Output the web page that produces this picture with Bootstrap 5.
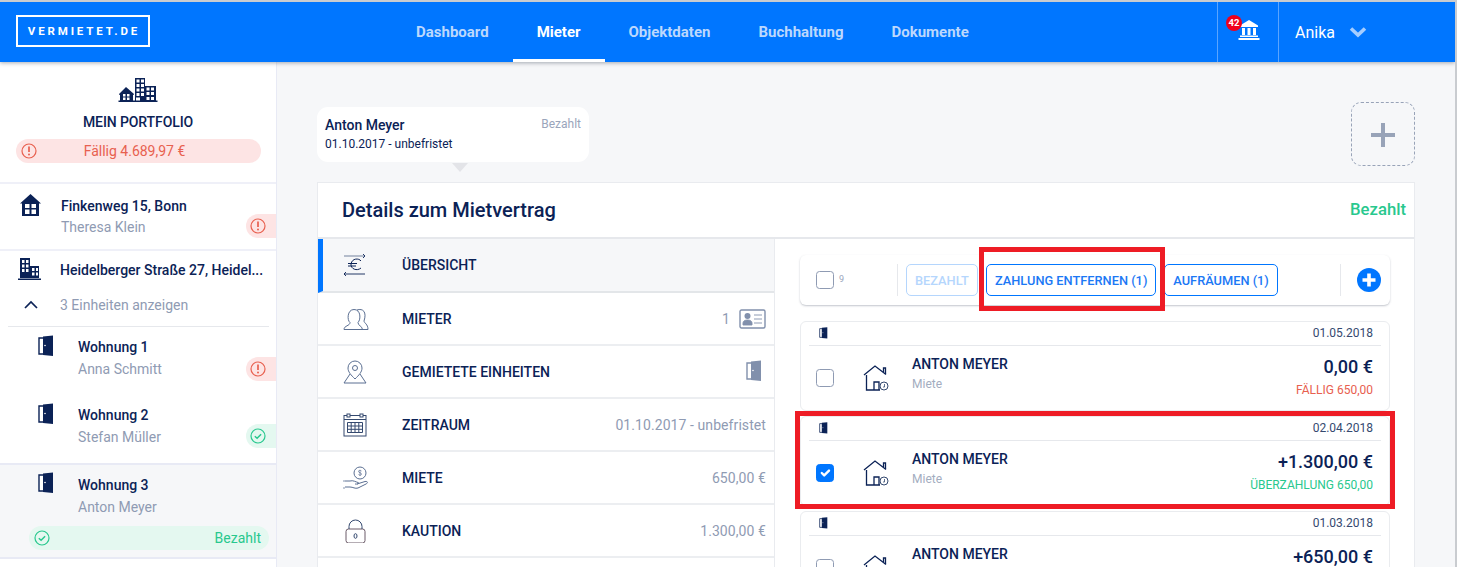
<!DOCTYPE html>
<html lang="de"><head><meta charset="utf-8"><title>Vermietet.de</title>
<link rel="stylesheet" href="https://cdn.jsdelivr.net/npm/bootstrap@5.3.0/dist/css/bootstrap.min.css">
<style>
html,body{height:567px;overflow:hidden}
body{font-family:Roboto,"Liberation Sans",sans-serif;font-size:14px;color:#0b2256;background:#f6f7f9;position:relative;border-top:2px solid #c9ccd0;border-right:2px solid #c9ccd0}
.topbar{height:60px;background:#0076ff;box-shadow:0 1px 4px rgba(60,70,90,.45);position:relative;z-index:3}
.brand{margin-left:16px;margin-top:13px;width:134px;height:32px;border:2px solid #fff;color:#fff;font-size:11.5px;font-weight:700;letter-spacing:2.85px;line-height:28px;text-align:center;padding-left:2px}
.menu{margin-left:242px;gap:0}
.menu a{height:60px;padding:0 24px;line-height:61px;font-weight:700;font-size:15px;color:#bcd8fd;text-decoration:none;display:block}
.menu a.on{color:#fff;border-bottom:3px solid #fff}
.bank{width:62px;height:60px;border-left:1px solid #5aa5ff;border-right:1px solid #5aa5ff;position:relative}
.bank svg{position:absolute;left:20px;top:18px}
.notif{position:absolute;left:8px;top:13px;width:16px;height:16px;border-radius:50%;background:#f0001c;color:#fff;font-size:9.5px;font-weight:700;text-align:center;line-height:15px}
.who{width:176px;padding-left:16px;color:#fff;font-size:16px;gap:14px;height:60px;line-height:61px}
.shell{height:505px}
.side{width:277px;flex:none;background:#fff;border-right:1px solid #e8eaf5;height:505px;overflow:hidden;position:relative}
.pf{height:122px;border-bottom:2px solid #eff0f8;text-align:center;padding-top:15px;position:relative}
.pf-t{font-weight:500;font-size:14px;line-height:18px;margin-top:11px;letter-spacing:-.1px}
.pillr{margin:8px 15px 0 16px;height:24px;border-radius:12px;background:#fde4e4;color:#e8604f;position:relative;text-align:center;line-height:24px;padding-right:8px}
.pillr svg,.pillg svg{position:absolute;left:5px;top:4px}
.it{position:relative}
.nm{font-weight:500;line-height:20px;white-space:nowrap;position:absolute}
.sb{color:#8f9bb3;line-height:20px;white-space:nowrap;position:absolute}
.ico{position:absolute}
.stat{position:absolute;right:0;width:30px;height:24px;border-radius:12px 0 0 12px}
.stat svg{position:absolute;left:4px;top:4px}
.sr{background:#fde4e4}.sg{background:#e4f8f0}
.it1{height:67px;border-bottom:2px solid #eff0f8}
.it2{height:75px}
.wo{height:68px}
.wo2{height:69px}
.wo1{margin:0 8px;border-top:1px solid #e6e8ec;width:261px}
.sel{height:96px;background:#f6f7f9;border-top:2px solid #e8eaf5;border-bottom:2px solid #e8eaf5}
.pillg{position:absolute;left:29px;top:61px;width:240px;height:24px;border-radius:12px;background:#e4f8f0;color:#28c88e;text-align:right;padding-right:8px;line-height:24px}
.mainp{flex:1;padding:45px 40px 0 40px;min-width:0;position:relative}
.tabc{width:272px;height:55px;background:#fff;border-radius:11px;padding:8px;position:relative}
.tabc b{font-weight:500;font-size:14px;line-height:20px}
.tabc small{font-size:12px;color:#9aa5bb;line-height:18px}
.tabd{font-size:12px;line-height:18px}
.arr{width:0;height:0;border-left:8px solid transparent;border-right:8px solid transparent;border-top:9px solid #e3e4e8;margin:1px 0 0 135px}
.adds{position:absolute;right:40px;top:40px;width:64px;height:64px;border:1px dashed #98a3b8;border-radius:10px}
.adds:before,.adds:after{content:"";position:absolute;background:#98a3b8}
.adds:before{left:19px;top:30px;width:24px;height:4px}
.adds:after{left:29px;top:20px;width:4px;height:24px}
.detail{margin-top:10px;background:#fff;border:1px solid #e9ebef;height:400px}
.dh{height:56px;border-bottom:2px solid #e6e8ec;padding:0 8px 0 24px;line-height:56px}
.dh h1{font-size:20px;font-weight:500;margin:0;line-height:54px}
.dh span{color:#28c88e;font-weight:500;font-size:16.7px;line-height:54px}
.lst{width:457px;flex:none;border-right:1px solid #e9ebef;background:#fff}
.rw{height:53px;border-bottom:2px solid #eceef1;position:relative;padding:0 8px 0 84px;line-height:52px;font-weight:500}
.rw.act{height:54px;background:#f6f7f9;border-left:5px solid #0076ff;padding-left:79px;border-bottom-color:#e3e6e9}
.rw svg.ri{position:absolute;left:25px;top:14px}
.rw.act svg.ri{left:20px}
.vl{color:#8f9bb3;font-weight:400;letter-spacing:.08px}
.vb{gap:9px;height:52px}
.vd{height:50px;margin-right:4px}
.pane{width:590px;flex:none;margin-left:25px;padding-top:16px}
.tb{height:50px;background:#fff;border-radius:6px;box-shadow:0 1px 2px rgba(80,90,110,.35);padding:0 8px 0 16px;position:relative}
.chk{width:18px;height:18px;margin:0;border:1px solid #8f9bb3;border-radius:4px;flex:none}
.form-check-input.chk:checked{background-color:#0076ff;border-color:#0076ff}
.nine{font-size:9px;color:#9aa5bb;margin-left:5px;width:58px}
.vbar{width:1px;height:32px;background:#e6e8ec}
.bb{height:32px;border-radius:5px;border:1px solid #0076ff;color:#1c78f5;background:#fff;font-size:12.8px;font-weight:500;line-height:31px;padding:0 8px;white-space:nowrap;margin-left:8px}
.bb.off{border-color:#b5d6fd;color:#b5d6fd;width:72px}
.vbar2{margin-left:62px}
.plusc{margin-left:16px}
.pcard{height:90px;margin-top:5px;background:#fff;border:1px solid #eaecef;border-radius:6px;padding:0 16px 0 8px;position:relative}
.pcard.first{margin-top:16px}
.ph{height:24px;border-bottom:1px solid #e6e8ec;font-size:12px;line-height:22px;text-align:right;color:#34496f;margin-right:-8px;padding-right:8px;position:relative}
.ph svg{position:absolute;left:10px;top:5px}
.pb{position:relative;height:65px}
.pb .chk{position:absolute;left:7px;top:23px}
.pb svg{position:absolute;left:54px;top:19px}
.pn{position:absolute;left:103px;top:8px;font-weight:500;line-height:20px}
.ps{position:absolute;left:103px;top:29px;font-size:12px;color:#a3adc0;line-height:18px}
.pa{position:absolute;right:0;top:10px;font-size:18px;font-weight:500;line-height:22px}
.pv{position:absolute;right:0;top:35px;font-size:12px;line-height:18px}
.due{color:#e8604f}.over{color:#28c88e}
.mark-box{position:absolute;border:5px solid #ee1c25;z-index:5;pointer-events:none}
.mb1{left:979px;top:245px;width:186px;height:64px}
.mb2{left:795px;top:409px;width:600px;height:98px}
.i-f{left:20px;top:10px}.i-h{left:18px;top:7px}.i-c{left:24px;top:49px}
.n-f{left:61px;top:12px}.s-f{left:61px;top:33px}.st-f{top:30px}
.n-h{left:60px;top:9px}.s-h{left:60px;top:44px}
.d1{left:30px;top:8px}.n1{left:70px;top:10px}.s1{left:70px;top:32px}
.st1{top:295px;right:0}
.d2{left:38px;top:9px}.n2{left:78px;top:11px}.s2{left:78px;top:33px}.st2{top:30px}
.d3{left:38px;top:7px}.n3{left:78px;top:10px}.s3{left:78px;top:32px}
</style></head>
<body>
<svg width="0" height="0" class="position-absolute">
<symbol id="door" viewBox="0 0 16 22"><path d="M1 3h5v16H1z" fill="#fff" stroke="#0b2256" stroke-width="1.4"/><path d="M5 1.500 15 .5v20.500L5 20z" fill="#0b2256"/><circle cx="7" cy="10.500" r=".8" fill="#fff"/></symbol>
<symbol id="alert" viewBox="0 0 16 16"><circle cx="8" cy="8" r="7" fill="none" stroke="#e8604f" stroke-width="1.2"/><path d="M8 3.600v5.400" stroke="#e8604f" stroke-width="1.7"/><circle cx="8" cy="11.600" r="1" fill="#e8604f"/></symbol>
<symbol id="ok" viewBox="0 0 16 16"><circle cx="8" cy="8" r="7" fill="none" stroke="#28c88e" stroke-width="1.2"/><path d="m4.800 8.200 2.300 2.100 4-4" fill="none" stroke="#28c88e" stroke-width="1.5"/></symbol>
<symbol id="hpay" viewBox="0 0 26 26"><g fill="none" stroke="#0b2256" stroke-width="1.3"><path d="M1 10 12 1l11 8.500"/><path d="M20.500 7V3h2v6M3.500 10v15H17M11 25v-8h5v8"/></g><circle cx="21" cy="21" r="4" fill="#fff" stroke="#34496f"/><path d="M21.500 19v3H20" fill="none" stroke="#34496f" stroke-width=".8"/></symbol>
</svg>

<header class="topbar d-flex">
  <div class="brand">VERMIETET.DE</div>
  <nav class="menu d-flex flex-grow-1">
    <a href="#">Dashboard</a><a href="#" class="on">Mieter</a><a href="#">Objektdaten</a><a href="#">Buchhaltung</a><a href="#">Dokumente</a>
  </nav>
  <div class="bank"><svg width="22" height="20" viewBox="0 0 22 20" fill="#fff"><path d="M11 0 2 5.500v1.500h18V5.500z"/><path d="M4 8h3v7H4zM9.500 8h3v7h-3zM15 8h3v7h-3z"/><path d="M2 15.500h18v1.500H2zM.5 18h21v2H.5z"/></svg><span class="notif">42</span></div>
  <div class="who d-flex align-items-center"><span>Anika</span><svg width="18" height="12" viewBox="0 0 18 12"><path d="M2 2.500 9 9l7-6.500" fill="none" stroke="#a5cdff" stroke-width="3.600"/></svg></div>
</header>

<div class="shell d-flex">
  <aside class="side">
    <div class="pf">
      <svg width="40" height="25" viewBox="0 0 40 25"><g fill="#0b2256"><path d="M.5 23.500h39V25H.5z"/><path d="M8 10 1 17v.8h1V24h13v-6.200h1v-.8z"/></g><g fill="#fff"><path d="M5 17h2.500v2.500H5zM9 17h2.500v2.500H9zM5 20.500h2.500V23H5zM9 20.500h2.500V23H9z"/></g><path d="M17 1h10v23H17z" fill="#0b2256"/><path d="M27 9h11v15H27z" fill="#0b2256"/><g fill="#fff"><path d="M18.500 2.500h3v3h-3zM23 2.500h3v3h-3zM18.500 7h3v3h-3zM23 7h3v3h-3zM18.500 11.500h3v3h-3zM23 11.500h3v3h-3zM18.500 16h3v3h-3zM23 16h3v3h-3zM28.500 10.500h3v3h-3zM33 10.500h3v3h-3zM28.500 15h3v3h-3zM33 15h3v3h-3zM28.500 20h3v3h-3zM33 20h3v3h-3zM18 20.500h4v3h-4z"/></g></svg>
      <div class="pf-t">MEIN PORTFOLIO</div>
      <div class="pillr"><svg width="16" height="16"><use href="#alert"/></svg>Fällig 4.689,97 €</div>
    </div>
    <div class="it it1">
      <svg class="ico i-f" width="21" height="22" viewBox="0 0 21 22"><path d="M10.500 0 0 9.500h2V22h17V9.500h2z" fill="#0b2256"/><path d="M5 10h4.500v4H5zM11.500 10H16v4h-4.500zM5 15.500h4.500V20H5zM11.500 15.500H16V20h-4.500z" fill="#fff"/></svg>
      <div class="nm n-f">Finkenweg 15, Bonn</div>
      <div class="sb s-f">Theresa Klein</div>
      <div class="stat sr st-f"><svg width="16" height="16"><use href="#alert"/></svg></div>
    </div>
    <div class="it it2">
      <svg class="ico i-h" width="23" height="22" viewBox="0 0 23 22"><path d="M2 0h10v20H2zM12 8h9v12h-9z" fill="#0b2256"/><path d="M4 2h2.500v3H4zM8 2h2.500v3H8zM4 6.500h2.500v3H4zM8 6.500h2.500v3H8zM4 11h2.500v3H4zM8 11h2.500v3H8zM14 10h2.500v3H14zM18 10h2v3h-2zM14 14.500h2.500v3H14zM18 14.500h2v3h-2z" fill="#fff"/><path d="M0 20.500h23V22H0z" fill="#0b2256"/></svg>
      <div class="nm n-h">Heidelberger Straße 27, Heidel...</div>
      <svg class="ico i-c" width="14" height="9" viewBox="0 0 14 9"><path d="M1 8 7 2l6 6" fill="none" stroke="#0b2256" stroke-width="1.700"/></svg>
      <div class="sb s-h">3 Einheiten anzeigen</div>
    </div>
    <div class="it wo wo1">
      <svg class="ico d1" width="16" height="22"><use href="#door"/></svg>
      <div class="nm n1">Wohnung 1</div>
      <div class="sb s1">Anna Schmitt</div>
    </div>
    <div class="it wo wo2">
      <svg class="ico d2" width="16" height="22"><use href="#door"/></svg>
      <div class="nm n2">Wohnung 2</div>
      <div class="sb s2">Stefan Müller</div>
      <div class="stat sg st2"><svg width="16" height="16"><use href="#ok"/></svg></div>
    </div>
    <div class="it sel">
      <svg class="ico d3" width="16" height="22"><use href="#door"/></svg>
      <div class="nm n3">Wohnung 3</div>
      <div class="sb s3">Anton Meyer</div>
      <div class="pillg"><svg width="16" height="16"><use href="#ok"/></svg>Bezahlt</div>
    </div>
    <div class="stat sr st1"><svg width="16" height="16"><use href="#alert"/></svg></div>
  </aside>

  <main class="mainp">
    <div class="tabc">
      <div class="d-flex justify-content-between"><b>Anton Meyer</b><small>Bezahlt</small></div>
      <div class="tabd">01.10.2017 - unbefristet</div>
    </div>
    <div class="arr"></div>
    <div class="adds"></div>
    <section class="detail">
      <div class="dh d-flex justify-content-between"><h1>Details zum Mietvertrag</h1><span>Bezahlt</span></div>
      <div class="d-flex">
        <div class="lst">
          <div class="rw act"><svg class="ri" width="24" height="24" viewBox="0 0 24 24" fill="none" stroke="#0b2256"><path d="M1 3h20" stroke="#98a3b8" stroke-width="1.400"/><path d="m20 1 2 2-2 2M1 21h21M3 19l-2 2 2 2" stroke-width=".9"/><path d="M18 8c-2-3-9-3-10 3-.5 5 6 7.500 10 4M5 10.500h9M5 13h8" stroke-width="1"/></svg>ÜBERSICHT</div>
          <div class="rw d-flex justify-content-between"><svg class="ri" width="26" height="24" viewBox="0 0 26 24" fill="none" stroke="#5b6f92"><path d="M1 22.500h24M1 22.500c0-4 6-3.500 6-7-3-2-3-13 4-13s7 10 4 13c0 3.500 4 3 4.500 7M14 3c6-2 10 2 7 11 0 2 4 3 4 8.500" stroke-width="1"/></svg><span>MIETER</span><span class="vl vb d-flex align-items-center">1 <svg width="27" height="21" viewBox="0 0 27 21"><rect x="1" y="1" width="25" height="18" rx="1.500" fill="none" stroke="#8190ac" stroke-width="1.400"/><circle cx="8.500" cy="7" r="3" fill="#8190ac"/><path d="M4 16v-2c0-2 2-3 4.500-3s4.500 1 4.500 3v2zM15 6h8M15 10h8M15 14h8" fill="#8190ac" stroke="#8190ac" stroke-width=".9"/></svg></span></div>
          <div class="rw d-flex justify-content-between"><svg class="ri" width="24" height="24" viewBox="0 0 24 24" fill="none" stroke="#5b6f92" stroke-width="1"><path d="M12 19c-4-4-7-7-7-11a7 7 0 0 1 14 0c0 4-3 7-7 11z"/><circle cx="12" cy="8" r="2.500"/><path d="M7 14 1 23h22l-6-9"/></svg><span>GEMIETETE EINHEITEN</span><span class="vl vd d-flex align-items-center"><svg width="16" height="22" viewBox="0 0 16 22"><path d="M1 3h5v16H1z" fill="#fff" stroke="#8190ac" stroke-width="1.400"/><path d="M5 1.500 15 .5v20.500L5 20z" fill="#8190ac"/><circle cx="7" cy="10.500" r=".8" fill="#fff"/></svg></span></div>
          <div class="rw d-flex justify-content-between"><svg class="ri" width="24" height="24" viewBox="0 0 24 24" fill="none" stroke="#34496f" stroke-width="1"><rect x="1" y="2.500" width="22" height="20.500"/><path d="M1 6.500h22"/><rect x="4" y="1" width="3" height="3" fill="#fff"/><rect x="17" y="1" width="3" height="3" fill="#fff"/><path d="M4.500 9.500h15v10h-15zM4.500 13h15M4.500 16.300h15M8.200 9.500v10M12 9.500v10M15.800 9.500v10"/></svg><span>ZEITRAUM</span><span class="vl">01.10.2017 - unbefristet</span></div>
          <div class="rw d-flex justify-content-between"><svg class="ri" width="26" height="24" viewBox="0 0 26 24" fill="none" stroke="#5b6f92" stroke-width="1"><circle cx="17" cy="7" r="6"/><path d="M17 4v6M15.500 8.500c1 1 3 1 3-.500s-3-1-3-2.500 2-1.500 3-.5" stroke-width=".7"/><path d="M2 15h5c3-1 6 1 8 1.500 2 .5 0 2-3 1.500M14 18l8-2.500c3-.5 3 1.500 1 2.500l-8 4c-3 1-5-1-8-1H2"/><path d="M1 14.500v8" stroke-dasharray="1 6" stroke-width="1.500"/></svg><span>MIETE</span><span class="vl">650,00 €</span></div>
          <div class="rw d-flex justify-content-between"><svg class="ri" width="24" height="24" viewBox="0 0 24 24" fill="none" stroke="#34496f" stroke-width="1"><rect x="3" y="10" width="19" height="14" rx="2.500" stroke="#6b5a68"/><path d="M6 10V7.500a6.500 6.500 0 0 1 13 0V10"/><ellipse cx="12.500" cy="17" rx="1.500" ry="2.300"/></svg><span>KAUTION</span><span class="vl">1.300,00 €</span></div>
        </div>
        <div class="pane">
          <div class="tb d-flex align-items-center">
            <input class="form-check-input chk" type="checkbox" aria-label="Alle">
            <span class="nine">9</span><span class="vbar"></span>
            <span class="bb off">BEZAHLT</span>
            <span class="bb">ZAHLUNG ENTFERNEN (1)</span>
            <span class="bb">AUFRÄUMEN (1)</span>
            <span class="vbar vbar2"></span>
            <svg class="plusc" width="24" height="24" viewBox="0 0 24 24"><circle cx="12" cy="12" r="12" fill="#0076ff"/><path d="M12 5.500v13M5.500 12h13" stroke="#fff" stroke-width="3.600"/></svg>
          </div>
          <article class="pcard first">
            <div class="ph"><svg width="9" height="12"><use href="#door"/></svg>01.05.2018</div>
            <div class="pb"><input class="form-check-input chk" type="checkbox" aria-label="Auswahl"><svg width="26" height="26"><use href="#hpay"/></svg><div class="pn">ANTON MEYER</div><div class="ps">Miete</div><div class="pa">0,00 €</div><div class="pv due">FÄLLIG 650,00</div></div>
          </article>
          <article class="pcard">
            <div class="ph"><svg width="9" height="12"><use href="#door"/></svg>02.04.2018</div>
            <div class="pb"><input class="form-check-input chk" type="checkbox" checked aria-label="Auswahl"><svg width="26" height="26"><use href="#hpay"/></svg><div class="pn">ANTON MEYER</div><div class="ps">Miete</div><div class="pa">+1.300,00 €</div><div class="pv over">ÜBERZAHLUNG 650,00</div></div>
          </article>
          <article class="pcard">
            <div class="ph"><svg width="9" height="12"><use href="#door"/></svg>01.03.2018</div>
            <div class="pb"><input class="form-check-input chk" type="checkbox" aria-label="Auswahl"><svg width="26" height="26"><use href="#hpay"/></svg><div class="pn">ANTON MEYER</div><div class="pa">+650,00 €</div></div>
          </article>
        </div>
      </div>
    </section>
  </main>
</div>
<div class="mark-box mb1"></div>
<div class="mark-box mb2"></div>
</body></html>
